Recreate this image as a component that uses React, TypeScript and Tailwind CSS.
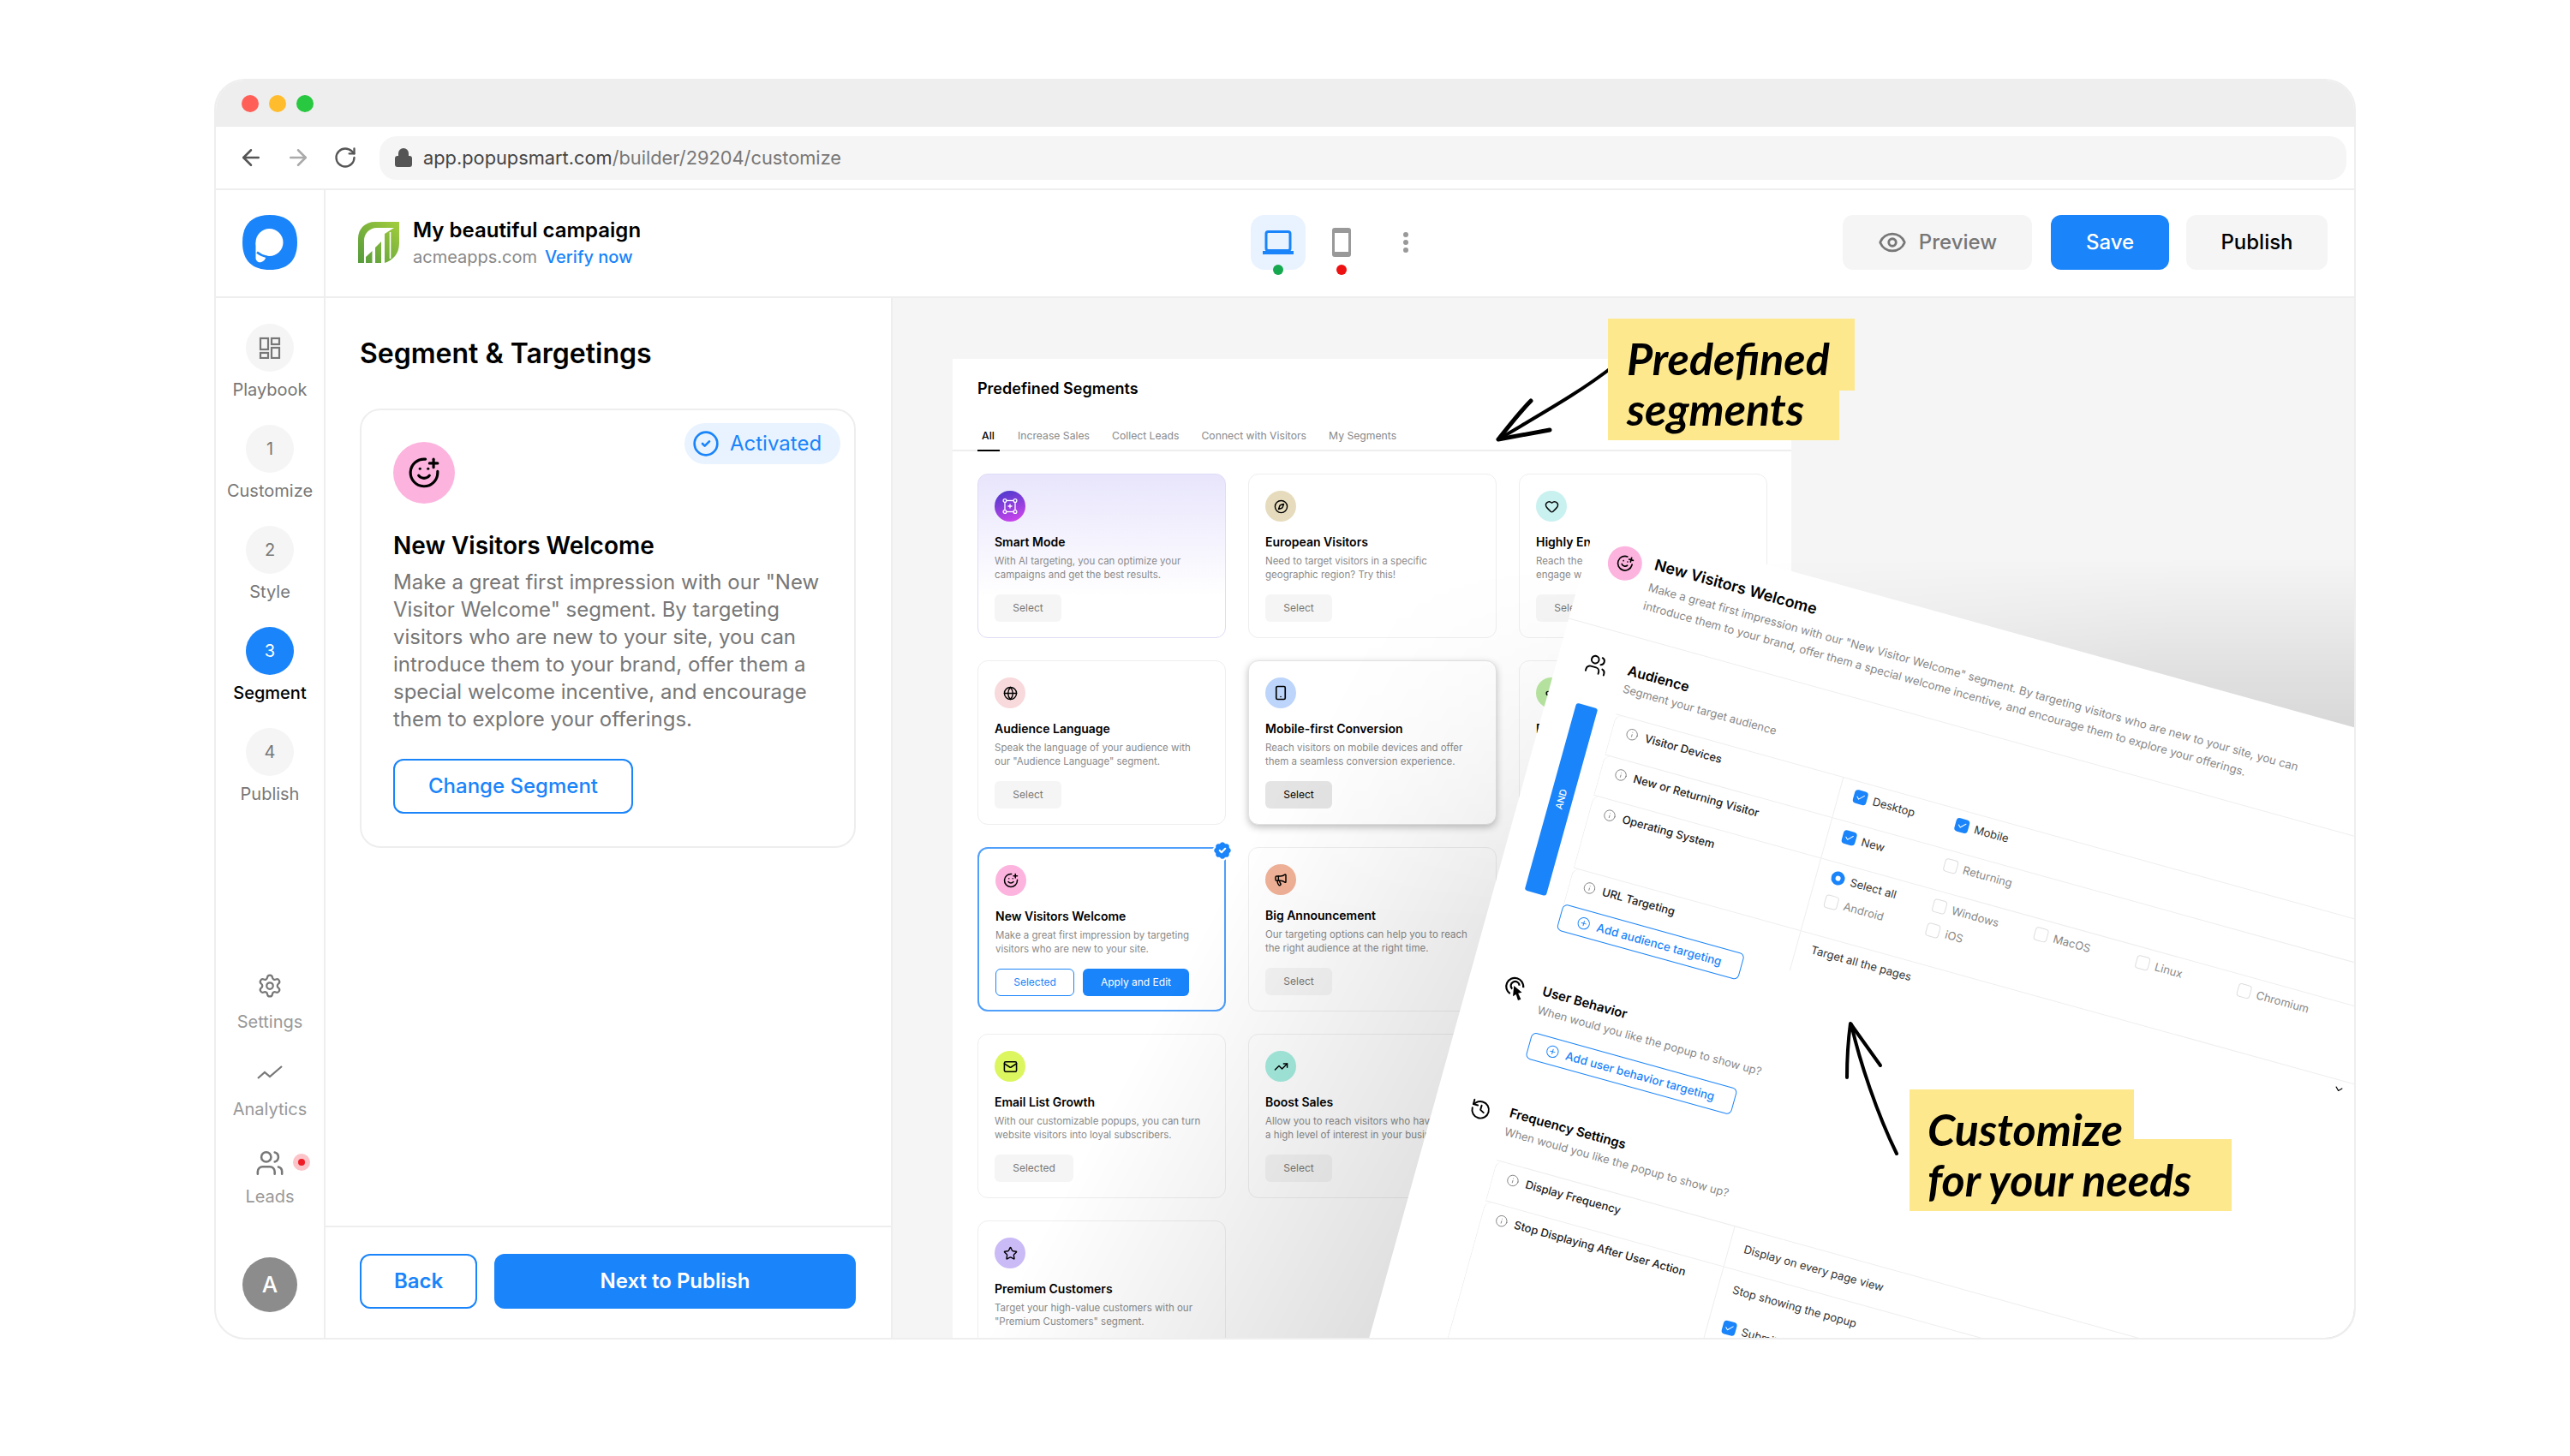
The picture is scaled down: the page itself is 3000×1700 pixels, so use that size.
import type { ReactNode } from 'react';
import {
  ArrowLeft,
  ArrowRight,
  BadgeCheck,
  Check,
  ChevronDown,
  CircleCheck,
  CirclePlus,
  Compass,
  Eye,
  Globe,
  Heart,
  History,
  Info,
  Lock,
  Mail,
  Megaphone,
  RotateCw,
  Settings,
  Share2,
  Smartphone,
  SmilePlus,
  Star,
  TrendingUp,
  Users,
} from 'lucide-react';

type Segment = {
  title: string;
  lines: string[];
  tint: string;
  icon: ReactNode;
  kind?: 'smart' | 'hover' | 'selected';
  action?: string;
};

const rows: Segment[][] = [
  [
    {
      title: 'Smart Mode',
      lines: ['With AI targeting, you can optimize your', 'campaigns and get the best results.'],
      tint: 'bg-[linear-gradient(160deg,#4338ca,#d946ef)]',
      kind: 'smart',
      icon: <SmartIcon />,
    },
    {
      title: 'European Visitors',
      lines: ['Need to target visitors in a specific', 'geographic region? Try this!'],
      tint: 'bg-[#e6dcbd]',
      icon: <Compass size={17} strokeWidth={2} />,
    },
    {
      title: 'Highly Engaged Visitors',
      lines: ['Reach the visitors who spend time and', 'engage with your website content.'],
      tint: 'bg-[#c9f1f0]',
      icon: <Heart size={17} strokeWidth={2} />,
    },
  ],
  [
    {
      title: 'Audience Language',
      lines: ['Speak the language of your audience with', 'our "Audience Language" segment.'],
      tint: 'bg-[#f8d9dc]',
      icon: <Globe size={17} strokeWidth={2} />,
    },
    {
      title: 'Mobile-first Conversion',
      lines: ['Reach visitors on mobile devices and offer', 'them a seamless conversion experience.'],
      tint: 'bg-[#bdd5fa]',
      kind: 'hover',
      icon: <Smartphone size={18} strokeWidth={2.2} />,
    },
    {
      title: 'Feedback Collection',
      lines: ['Hear what your visitors think about', 'your products and your website.'],
      tint: 'bg-[#b9e8a2]',
      icon: <Share2 size={17} strokeWidth={2} />,
    },
  ],
  [
    {
      title: 'New Visitors Welcome',
      lines: ['Make a great first impression by targeting', 'visitors who are new to your site.'],
      tint: 'bg-[#fcb4de]',
      kind: 'selected',
      icon: <SmilePlus size={18} strokeWidth={2} />,
    },
    {
      title: 'Big Announcement',
      lines: ['Our targeting options can help you to reach', 'the right audience at the right time.'],
      tint: 'bg-[#f0b297]',
      icon: <Megaphone size={16} strokeWidth={2.2} />,
    },
  ],
  [
    {
      title: 'Email List Growth',
      lines: ['With our customizable popups, you can turn', 'website visitors into loyal subscribers.'],
      tint: 'bg-[#dcf65f]',
      action: 'Selected',
      icon: <Mail size={17} strokeWidth={2.2} />,
    },
    {
      title: 'Boost Sales',
      lines: ['Allow you to reach visitors who have shown', 'a high level of interest in your business.'],
      tint: 'bg-[#a5ecdf]',
      icon: <TrendingUp size={17} strokeWidth={2} />,
    },
  ],
  [
    {
      title: 'Premium Customers',
      lines: ['Target your high-value customers with our', '"Premium Customers" segment.'],
      tint: 'bg-[#cabaf6]',
      icon: <Star size={17} strokeWidth={2} />,
    },
  ],
];

function SmartIcon() {
  return (
    <svg width="18" height="20" viewBox="0 0 18 20" fill="none" stroke="white" strokeWidth="1.3">
      <rect x="3" y="3.5" width="12" height="13" />
      <circle cx="3" cy="3.5" r="1.9" fill="#6d3bdc" />
      <circle cx="15" cy="3.5" r="1.9" fill="#6d3bdc" />
      <circle cx="3" cy="16.5" r="1.9" fill="#a03fe6" />
      <circle cx="15" cy="16.5" r="1.9" fill="#a03fe6" />
      <path d="M9 7.5v5M6.5 10h5" />
    </svg>
  );
}

function Logo() {
  return (
    <svg width="64" height="64" viewBox="0 0 64 64">
      <path d="M32 0C52 0 64 10 64 32S52 64 32 64 0 54 0 32 12 0 32 0Z" fill="#1a84fa" />
      <circle cx="31.5" cy="32" r="16" fill="white" />
      <path d="M15.5 32V50C15.5 54 19 56 22 55C25 54 27 52 28 47Z" fill="white" />
      <path d="M17 43.5C20 46 24 48 29 49" fill="none" stroke="#1a84fa" strokeWidth="2.4" />
    </svg>
  );
}

function LeafLogo() {
  return (
    <svg width="48" height="48" viewBox="0 0 48 48">
      <defs>
        <linearGradient id="leaf" x1="1" y1="0" x2="0" y2="1">
          <stop offset="0" stopColor="#a3cd3d" />
          <stop offset="1" stopColor="#559a3c" />
        </linearGradient>
      </defs>
      <path d="M48 0H20C8 0 0 8 0 20V48H7V22C7 14 13 7 22 7H42L31 14V48C40 45 48 38 48 25ZM9 48V41L16.5 34V48ZM20 48V30L27 23V48Z" fill="url(#leaf)" />
      <path d="M37.5 12V43" stroke="white" strokeWidth="1.6" />
    </svg>
  );
}

function SegmentCard({ segment }: { segment: Segment }) {
  const { kind } = segment;
  return (
    <div
      className={`relative w-[290px] h-[192px] shrink-0 rounded-xl border px-[19px] pt-[19px] ${
        kind === 'selected'
          ? 'border-2 border-[#4f9ffb] bg-white px-[18px] pt-[18px]'
          : kind === 'smart'
            ? 'border-[#dedcf5] bg-[linear-gradient(180deg,#e8e5fc,#ffffff_75%)]'
            : kind === 'hover'
              ? 'border-[#e2e2e2] bg-white shadow-[0_3px_8px_rgba(0,0,0,0.25)]'
              : 'border-[#eeeeee] bg-white'
      }`}
    >
      <div className={`flex h-9 w-9 items-center justify-center rounded-full text-black ${segment.tint}`}>
        {segment.icon}
      </div>
      <div className="mt-[14px] text-[14px] leading-5 font-semibold whitespace-nowrap text-black">{segment.title}</div>
      <div className="mt-1 text-[11.5px] leading-4 whitespace-nowrap text-[#8a8a8a]">
        {segment.lines.map(line => (
          <div key={line}>{line}</div>
        ))}
      </div>
      {kind === 'selected' ? (
        <div className="mt-[15px] flex gap-[10px] text-[12px]">
          <div className="flex h-8 w-[92px] items-center justify-center rounded-md border border-[#1a84fa] text-[#1a84fa]">
            Selected
          </div>
          <div className="flex h-8 w-[124px] items-center justify-center rounded-md bg-[#1a84fa] text-white">
            Apply and Edit
          </div>
        </div>
      ) : (
        <div
          className={`mt-[15px] flex h-8 items-center justify-center rounded-md text-[12px] ${
            segment.action ? 'w-[92px]' : 'w-[78px]'
          } ${kind === 'hover' ? 'bg-[#e4e4e4] text-black' : 'bg-[#f5f5f5] text-[#777777]'}`}
        >
          {segment.action ?? 'Select'}
        </div>
      )}
      {kind === 'selected' && (
        <BadgeCheck size={26} fill="#1a84fa" stroke="white" strokeWidth={2} className="absolute -top-[11px] -right-[11px]" />
      )}
    </div>
  );
}

function Step({ label, children, active }: { label: string; children: ReactNode; active?: boolean }) {
  return (
    <div className="flex h-[118px] flex-col items-center">
      <div
        className={`flex h-14 w-14 items-center justify-center rounded-full text-[20px] ${
          active ? 'bg-[#1a84fa] text-white' : 'bg-[#f5f5f5] text-[#777777]'
        }`}
      >
        {children}
      </div>
      <div className={`mt-[9px] text-[20px] leading-6 ${active ? 'font-medium text-black' : 'text-[#777777]'}`}>{label}</div>
    </div>
  );
}

function Option({ label, checked, radio, muted }: { label: string; checked?: boolean; radio?: boolean; muted?: boolean }) {
  return (
    <div className="flex w-[123px] items-center gap-[7px]">
      {radio ? (
        <div className="h-[16px] w-[16px] rounded-full border-[5px] border-[#1a84fa] bg-white" />
      ) : checked ? (
        <div className="flex h-[16px] w-[16px] items-center justify-center rounded-[4px] bg-[#1a84fa]">
          <Check size={12} color="white" strokeWidth={2} />
        </div>
      ) : (
        <div className="h-[16px] w-[16px] rounded-[4px] border border-[#dddddd] bg-white" />
      )}
      <span className={`text-[13px] leading-4 ${muted ? 'text-[#888888]' : 'text-[#333333]'}`}>{label}</span>
    </div>
  );
}

function RuleRow({ label, height, labelWidth = 'w-[275px]', children }: { label: string; height: string; labelWidth?: string; children: ReactNode }) {
  return (
    <div className={`flex border-t border-[#eeeeee] ${height}`}>
      <div className={`flex items-start gap-[8px] rounded-tl-lg border-l border-[#eeeeee] pt-[9px] pl-[16px] ${labelWidth}`}>
        <Info size={15} strokeWidth={1.3} className="mt-[1px] text-[#777777]" />
        <span className="text-[13px] leading-[17px] font-medium whitespace-nowrap text-[#222222]">{label}</span>
      </div>
      <div className="flex-1 border-l border-[#eeeeee] pt-[9px] pl-[17px]">{children}</div>
    </div>
  );
}

function AddButton({ label, width, margin }: { label: string; width: string; margin: string }) {
  return (
    <div className={`relative flex h-[32px] items-center gap-[8px] rounded-md border border-[#1a84fa] bg-white pl-[20px] text-[13.5px] font-medium whitespace-nowrap text-[#1a84fa] ${width} ${margin}`}>
      <CirclePlus size={16} strokeWidth={1.5} />
      {label}
    </div>
  );
}

function MousePointerRings() {
  return (
    <svg width="26" height="30" viewBox="0 0 26 30" fill="none" stroke="black" strokeWidth="2.2" className="ml-[8px]">
      <path d="M10 22A10 10 0 1 1 23 11" />
      <path d="M11 16A5 5 0 1 1 18 10" />
      <path d="M12 12l11 5-4 2 5 6-3 2-4-6-3 3Z" fill="black" stroke="none" />
    </svg>
  );
}

function TiltedPanel() {
  return (
    <div className="absolute top-[256px] left-[822px] h-[1400px] w-[1180px] origin-top-left rotate-[15.5deg] bg-white">
      <div className="flex h-[123px] border-b border-[#eeeeee] pt-[23px] pl-[26px]">
        <div className="flex h-10 w-10 items-center justify-center rounded-full bg-[#fcb4de]">
          <SmilePlus size={20} strokeWidth={2} />
        </div>
        <div className="ml-[14px]">
          <div className="text-[18px] leading-6 font-semibold text-black">New Visitors Welcome</div>
          <div className="mt-1 text-[13.2px] leading-[22px] whitespace-nowrap text-[#888888]">
            <div>
              Make a great first impression with our "New Visitor Welcome" segment. By targeting visitors who are new to your site, you can
            </div>
            <div>introduce them to your brand, offer them a special welcome incentive, and encourage them to explore your offerings.</div>
          </div>
        </div>
      </div>

      <div className="pl-[33px]">
        <div className="flex h-[92px] pt-[28px]">
          <Users size={26} strokeWidth={1.8} className="mt-[2px] text-black" />
          <div className="ml-[24px]">
            <div className="text-[16px] leading-[22px] font-semibold text-black">Audience</div>
            <div className="text-[13px] leading-[22px] text-[#888888]">Segment your target audience</div>
          </div>
        </div>

        <div className="flex">
          <div className="ml-[2px] flex h-[227px] w-[26px] items-center justify-center rounded-[3px] bg-[#1a84fa]">
            <span className="-rotate-90 text-[11px] font-medium text-white">AND</span>
          </div>
          <div className="ml-[22px] flex-1">
            <RuleRow label="Visitor Devices" height="h-[49px]">
              <div className="flex">
                <Option label="Desktop" checked />
                <Option label="Mobile" checked />
              </div>
            </RuleRow>
            <RuleRow label="New or Returning Visitor" height="h-[49px]">
              <div className="flex">
                <Option label="New" checked />
                <Option label="Returning" muted />
              </div>
            </RuleRow>
            <RuleRow label="Operating System" height="h-[88px]">
              <div className="flex">
                <Option label="Select all" radio />
                <Option label="Windows" muted />
                <Option label="MacOS" muted />
                <Option label="Linux" muted />
                <Option label="Chromium" muted />
              </div>
              <div className="mt-[13px] flex">
                <Option label="Android" muted />
                <Option label="iOS" muted />
              </div>
            </RuleRow>
            <RuleRow label="URL Targeting" height="h-[49px]">
              <div className="flex items-center justify-between pr-[160px]">
                <span className="text-[13px] leading-4 text-[#333333]">Target all the pages</span>
                <ChevronDown size={14} strokeWidth={2} className="-mt-[14px] text-black" />
              </div>
            </RuleRow>
          </div>
        </div>

        <AddButton label="Add audience targeting" width="w-[220px]" margin="-mt-[5px] ml-[50px]" />

        <div className="mt-[64px] flex">
          <MousePointerRings />
          <div className="ml-[20px] -mt-[2px]">
            <div className="text-[15px] leading-[22px] font-semibold text-black">User Behavior</div>
            <div className="text-[13px] leading-[22px] text-[#888888]">When would you like the popup to show up?</div>
          </div>
        </div>

        <AddButton label="Add user behavior targeting" width="w-[249px]" margin="mt-[16px] ml-[55px]" />

        <div className="mt-[57px] flex">
          <History size={26} strokeWidth={1.8} className="mt-[2px] ml-[8px] text-black" />
          <div className="ml-[21px] -mt-[2px]">
            <div className="text-[15px] leading-[22px] font-semibold text-black">Frequency Settings</div>
            <div className="text-[13px] leading-[22px] text-[#888888]">When would you like the popup to show up?</div>
          </div>
        </div>

        <div className="mt-[24px] ml-[55px]">
          <RuleRow label="Display Frequency" height="h-[49px]" labelWidth="w-[288px]">
            <span className="text-[13px] leading-4 text-[#333333]">Display on every page view</span>
          </RuleRow>
          <RuleRow label="Stop Displaying After User Action" height="h-[240px]" labelWidth="w-[288px]">
            <span className="text-[13px] leading-4 text-[#333333]">Stop showing the popup</span>
            <div className="mt-[26px]">
              <Option label="Submit form" checked />
            </div>
          </RuleRow>
        </div>
      </div>
    </div>
  );
}

export default function App() {
  return (
    <div className="h-[1700px] w-[3000px] bg-white pt-[92px] pl-[250px] font-[Inter,sans-serif]">
      <div className="flex h-[1472px] w-[2500px] flex-col overflow-hidden rounded-[36px] border-2 border-[#eeeeee] bg-white">
        {/* window chrome */}
        <div className="flex h-[54px] shrink-0 items-center gap-[12px] bg-[#eeeeee] px-[30px]">
          <div className="h-5 w-5 rounded-full bg-[#ff5f57]" />
          <div className="h-5 w-5 rounded-full bg-[#ffbd2e]" />
          <div className="h-5 w-5 rounded-full bg-[#28c840]" />
        </div>
        <div className="flex h-[74px] shrink-0 items-center border-b-2 border-[#eeeeee] pr-[9px] pl-[26px]">
          <ArrowLeft size={30} strokeWidth={2} className="text-[#555555]" />
          <ArrowRight size={30} strokeWidth={2} className="ml-[25px] text-[#aaaaaa]" />
          <RotateCw size={28} strokeWidth={2} className="ml-[26px] text-[#555555]" />
          <div className="ml-[26px] flex h-[51px] flex-1 items-center rounded-[20px] bg-[#f5f5f5] pl-[16px] text-[21.8px]">
            <Lock size={24} fill="#555555" strokeWidth={2} className="text-[#555555]" />
            <span className="ml-[11px] text-[#444444]">app.popupsmart.com</span>
            <span className="text-[#777777]">/builder/29204/customize</span>
          </div>
        </div>

        <div className="flex min-h-0 flex-1">
          {/* left rail */}
          <div className="flex w-[128px] shrink-0 flex-col items-center border-r-2 border-[#eeeeee]">
            <div className="flex h-[126px] w-full shrink-0 items-center justify-center border-b-2 border-[#eeeeee] pb-[2px]">
              <Logo />
            </div>
            <div className="pt-[30px]">
              <Step label="Playbook">
                <svg width="26" height="26" viewBox="0 0 26 26" fill="none" stroke="#777777" strokeWidth="2.2">
                  <rect x="2" y="2" width="9" height="13" />
                  <rect x="15" y="2" width="9" height="7" />
                  <rect x="2" y="19" width="9" height="6" />
                  <rect x="15" y="13" width="9" height="12" />
                </svg>
              </Step>
              <Step label="Customize">1</Step>
              <Step label="Style">2</Step>
              <Step label="Segment" active>
                3
              </Step>
              <Step label="Publish">4</Step>
            </div>
            <div className="mt-auto flex flex-col items-center pb-[30px] text-[20px] leading-6 text-[#999999]">
              <div className="flex h-[103px] flex-col items-center">
                <Settings size={30} strokeWidth={1.8} className="text-[#777777]" />
                <div className="mt-[15px]">Settings</div>
              </div>
              <div className="flex h-[102px] flex-col items-center">
                <svg width="30" height="28" viewBox="0 0 30 28" fill="none" stroke="#777777" strokeWidth="2.2">
                  <path d="M1 20l8-7 6 5L29 6" />
                </svg>
                <div className="mt-[16px]">Analytics</div>
              </div>
              <div className="relative flex flex-col items-center">
                <Users size={34} strokeWidth={1.8} className="text-[#777777]" />
                <div className="mt-[10px]">Leads</div>
                <div className="absolute top-[6px] -right-[18px] flex h-5 w-5 items-center justify-center rounded-full bg-[#fbc4c8]">
                  <div className="h-2 w-2 rounded-full bg-[#ee1c25]" />
                </div>
              </div>
              <div className="mt-[59px] flex h-16 w-16 items-center justify-center rounded-full bg-[#8c8c8c] text-[26px] font-medium text-white">
                A
              </div>
            </div>
          </div>

          <div className="flex min-w-0 flex-1 flex-col">
            {/* top bar */}
            <div className="flex h-[126px] shrink-0 items-center border-b-2 border-[#eeeeee] pr-[31px] pb-[2px] pl-[38px]">
              <LeafLogo />
              <div className="ml-[16px] w-[266px] pt-[1px]">
                <div className="text-[24px] leading-8 font-semibold whitespace-nowrap text-black">My beautiful campaign</div>
                <div className="mt-[1px] text-[20px] leading-7 whitespace-nowrap">
                  <span className="text-[#888888]">acmeapps.com</span>
                  <span className="ml-[9px] font-medium text-[#1a84fa]">Verify now</span>
                </div>
              </div>
              <div className="relative ml-[712px] flex h-16 w-16 items-center justify-center rounded-2xl bg-[#e8f3ff]">
                <svg width="36" height="28" viewBox="0 0 36 28" fill="none">
                  <rect x="4" y="1.5" width="28" height="22" rx="2.5" stroke="#1a84fa" strokeWidth="3" />
                  <rect y="24" width="36" height="4" fill="#1a84fa" />
                </svg>
                <div className="absolute -bottom-[6px] left-[26px] h-3 w-3 rounded-full bg-[#15a84f]" />
              </div>
              <div className="relative ml-[10px] flex h-16 w-16 items-center justify-center">
                <svg width="22" height="34" viewBox="0 0 22 34">
                  <rect width="22" height="34" rx="3" fill="#999999" />
                  <rect x="3" y="6" width="16" height="22" fill="white" />
                </svg>
                <div className="absolute -bottom-[6px] left-[26px] h-3 w-3 rounded-full bg-[#ee1111]" />
              </div>
              <div className="ml-[40px] flex flex-col gap-[3px]">
                <div className="h-[6px] w-[6px] rounded-full bg-[#999999]" />
                <div className="h-[6px] w-[6px] rounded-full bg-[#999999]" />
                <div className="h-[6px] w-[6px] rounded-full bg-[#999999]" />
              </div>
              <div className="ml-auto flex h-16 w-[221px] items-center justify-center gap-[14px] rounded-xl bg-[#f5f5f5] text-[24px] font-medium text-[#777777]">
                <Eye size={34} strokeWidth={2} />
                Preview
              </div>
              <div className="ml-[22px] flex h-16 w-[138px] items-center justify-center rounded-xl bg-[#1a84fa] text-[24px] font-medium text-white">
                Save
              </div>
              <div className="ml-[20px] flex h-16 w-[165px] items-center justify-center rounded-xl bg-[#f5f5f5] text-[24px] font-medium text-black">
                Publish
              </div>
            </div>

            <div className="flex min-h-0 flex-1">
              {/* settings panel */}
              <div className="flex w-[662px] shrink-0 flex-col border-r-2 border-[#eeeeee]">
                <div className="flex-1 pt-[45px] pl-[40px]">
                  <h1 className="text-[32px] leading-10 font-semibold text-black">Segment &amp; Targetings</h1>
                  <div className="relative mt-[44px] h-[513px] w-[579px] rounded-3xl border-2 border-[#eeeeee] pt-[37px] pl-[37px]">
                    <div className="flex h-[72px] w-[72px] items-center justify-center rounded-full bg-[#fcb4de]">
                      <SmilePlus size={38} strokeWidth={2} />
                    </div>
                    <div className="mt-[31px] text-[28px] leading-9 font-semibold text-black">New Visitors Welcome</div>
                    <p className="mt-[9px] w-[505px] text-[24px] leading-8 text-[#777777]">
                      Make a great first impression with our "New Visitor Welcome" segment. By targeting visitors who are new to your site, you can introduce them to your brand, offer them a special welcome incentive, and encourage them to explore your offerings.
                    </p>
                    <div className="mt-[30px] flex h-16 w-[280px] items-center justify-center rounded-xl border-2 border-[#1a84fa] text-[24px] font-medium text-[#1a84fa]">
                      Change Segment
                    </div>
                    <div className="absolute top-[15px] right-[16px] flex h-12 w-[182px] items-center gap-[12px] rounded-full bg-[#e8f3ff] pl-[9px] text-[24px] text-[#1a84fa]">
                      <CircleCheck size={32} strokeWidth={2} />
                      Activated
                    </div>
                  </div>
                </div>
                <div className="flex h-[131px] shrink-0 gap-[20px] border-t-2 border-[#eeeeee] pt-[31px] pl-[40px]">
                  <div className="flex h-16 w-[137px] items-center justify-center rounded-xl border-2 border-[#1a84fa] text-[24px] font-semibold text-[#1a84fa]">
                    Back
                  </div>
                  <div className="flex h-16 w-[422px] items-center justify-center rounded-xl bg-[#1a84fa] text-[24px] font-semibold text-white">
                    Next to Publish
                  </div>
                </div>
              </div>

              {/* preview canvas */}
              <div className="relative min-w-0 flex-1 overflow-hidden bg-[#f5f5f5] pt-[71px] pl-[70px]">
                <div className="h-[1300px] w-[979px] bg-white">
                  <div className="px-[29px] pt-[24px] text-[18px] leading-[22px] font-semibold text-black">Predefined Segments</div>
                  <div className="mt-[33px] flex h-[29px] gap-[26px] border-b-2 border-[#eeeeee] pl-[29px] text-[12.2px] leading-[22px] text-[#888888]">
                    <span className="-mr-[5px] h-[29px] w-[26px] border-b-2 border-black pl-[5px] font-medium text-black">All</span>
                    <span>Increase Sales</span>
                    <span>Collect Leads</span>
                    <span>Connect with Visitors</span>
                    <span>My Segments</span>
                  </div>
                  <div className="flex flex-col gap-[26px] pt-[26px] pl-[29px]">
                    {rows.map(row => (
                      <div key={row[0].title} className="flex gap-[26px]">
                        {row.map(segment => (
                          <SegmentCard key={segment.title} segment={segment} />
                        ))}
                      </div>
                    ))}
                  </div>
                </div>

                {/* shade cast by the tilted sheet */}
                <div className="pointer-events-none absolute inset-0 bg-[linear-gradient(118deg,rgba(0,0,0,0)_32%,rgba(0,0,0,0.26)_72%)] [mask-image:linear-gradient(180deg,transparent_25%,black_60%)]" />

                <TiltedPanel />

                {/* annotations */}
                <svg className="absolute top-[70px] left-[690px]" width="160" height="110" viewBox="1731 418 160 110" fill="none" stroke="black" strokeWidth="4" strokeLinecap="round" strokeLinejoin="round">
                  <path d="M1883 427C1845 457 1800 482 1748 513" />
                  <path d="M1786 468C1772 482 1760 498 1748 513L1808 502" strokeWidth="5" />
                </svg>
                <svg className="absolute top-[837px] left-[1099px]" width="90" height="170" viewBox="2140 1185 90 170" fill="none" stroke="black" strokeWidth="4" strokeLinecap="round" strokeLinejoin="round">
                  <path d="M2213 1347C2190 1300 2170 1240 2160 1196" />
                  <path d="M2155 1258C2155 1230 2157 1210 2159 1195L2194 1244" />
                </svg>
                <div className="absolute top-[24px] left-[835px] font-[Lato,sans-serif] text-[52px] font-bold text-black italic">
                  <div className="h-[84px] w-[288px] bg-[#fde88e] pt-[17px] pl-[22px] leading-[58px]">Predefined</div>
                  <div className="h-[58px] w-[270px] bg-[#fde88e] pl-[22px] leading-[42px]">segments</div>
                </div>
                <div className="absolute top-[924px] left-[1187px] font-[Lato,sans-serif] text-[52px] font-bold text-black italic">
                  <div className="h-[58px] w-[262px] bg-[#fde88e] pt-[17px] pl-[21px] leading-[58px]">Customize</div>
                  <div className="h-[84px] w-[376px] bg-[#fde88e] pt-[18px] pl-[21px] leading-[58px]">for your needs</div>
                </div>
              </div>
            </div>
          </div>
        </div>
      </div>
    </div>
  );
}
